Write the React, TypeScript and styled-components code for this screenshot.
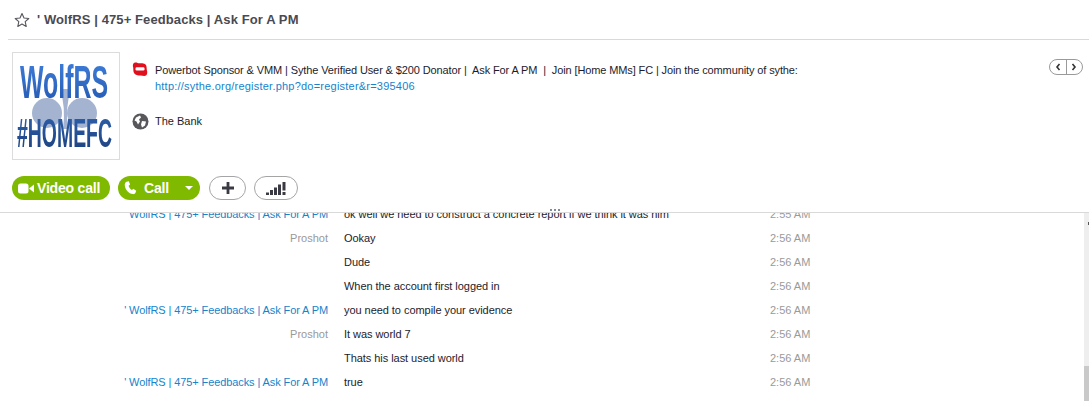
import React from 'react'
import styled, { createGlobalStyle } from 'styled-components'

const GlobalStyle = createGlobalStyle`
  html, body {
    margin: 0;
    padding: 0;
    background: #fff;
    overflow: hidden;
  }
  body {
    font-family: "Liberation Sans", sans-serif;
    font-size: 11px;
    color: #1c1c2c;
  }
`

const Page = styled.div`
  width: 1089px;
  height: 401px;
  display: flex;
  flex-direction: column;
  overflow: hidden;
`

const Header = styled.div`
  height: 40px;
  box-sizing: border-box;
  margin-left: 8px;
  border-bottom: 1px solid #d9d9d9;
  display: flex;
  align-items: center;
  gap: 7px;
  padding-left: 6px;
  flex-shrink: 0;
`

const Title = styled.div`
  font-size: 13px;
  font-weight: bold;
  color: #4a4a52;
  letter-spacing: 0.1px;
  white-space: pre;
`

const Profile = styled.div`
  height: 120px;
  box-sizing: border-box;
  padding: 12px 6px 0 12px;
  display: flex;
  flex-shrink: 0;
`

const Avatar = styled.div`
  width: 108px;
  height: 108px;
  box-sizing: border-box;
  border: 1px solid #dcdcdc;
  flex-shrink: 0;
`

const Details = styled.div`
  flex: 1;
  display: flex;
  flex-direction: column;
  gap: 19px;
  padding: 10px 0 0 12px;
`

const DetailRow = styled.div`
  display: flex;
  gap: 6px;
  line-height: 16px;
  white-space: pre;
`

const IconSlot = styled.div`
  width: 17px;
  height: 17px;
  flex-shrink: 0;
`

const Mood = styled.div`
  letter-spacing: -0.115px;
`

const Link = styled.div`
  color: #1683cc;
  letter-spacing: 0.22px;
`

const Pager = styled.div`
  width: 34px;
  height: 16px;
  box-sizing: border-box;
  border: 1px solid #9a9a9a;
  border-radius: 8px;
  margin-top: 7px;
  display: flex;
  flex-shrink: 0;
`

const PagerSide = styled.div<{ $divided?: boolean }>`
  flex: 1;
  display: flex;
  align-items: center;
  justify-content: center;
  border-right: ${p => (p.$divided ? '1px solid #9a9a9a' : 'none')};
`

const Toolbar = styled.div`
  height: 53px;
  box-sizing: border-box;
  border-bottom: 1px solid #d9d9d9;
  padding: 16px 0 0 12px;
  display: flex;
  align-items: flex-start;
  flex-shrink: 0;
  position: relative;
`

const Grip = styled.div`
  position: absolute;
  left: 550px;
  top: 49px;
  display: flex;
  gap: 2px;
`

const GripDot = styled.div`
  width: 2px;
  height: 2px;
  background: #7f8a9c;
`

const GreenButton = styled.div<{ $width: number; $gap: number; $after: number }>`
  width: ${p => p.$width}px;
  height: 24px;
  box-sizing: border-box;
  margin-right: ${p => p.$after}px;
  padding-left: 6px;
  border-radius: 12px;
  background: #7fba00;
  color: #fff;
  font-size: 14px;
  font-weight: bold;
  letter-spacing: -0.2px;
  display: flex;
  align-items: center;
  gap: ${p => p.$gap}px;
`

const Caret = styled.div`
  width: 0;
  height: 0;
  margin-left: 9px;
  border-left: 4px solid transparent;
  border-right: 4px solid transparent;
  border-top: 4px solid #fff;
`

const OutlineButton = styled.div<{ $width: number }>`
  width: ${p => p.$width}px;
  height: 24px;
  box-sizing: border-box;
  margin-right: 8px;
  border: 1px solid #a5a5a5;
  border-radius: 12px;
  display: flex;
  align-items: center;
  justify-content: center;
`

const Transcript = styled.div`
  flex: 1;
  min-height: 0;
  display: flex;
  overflow: hidden;
`

const MessageList = styled.div`
  flex: 1;
  margin-top: -11px;
`

const Message = styled.div`
  height: 24px;
  display: grid;
  grid-template-columns: 328px 410px 40px;
  column-gap: 16px;
  align-items: center;
  line-height: 24px;
  white-space: pre;
`

const Sender = styled.div<{ $self?: boolean }>`
  text-align: right;
  color: ${p => (p.$self ? '#999' : '#1683cc')};
  letter-spacing: ${p => (p.$self ? '0' : '-0.1px')};
`

const Body = styled.div`
  letter-spacing: -0.05px;
`

const Time = styled.div`
  color: #9a9a9a;
`

const ScrollTrack = styled.div`
  width: 5px;
  background: #eeeeee;
  display: flex;
  flex-direction: column;
  justify-content: flex-end;
  flex-shrink: 0;
  position: relative;
`

const ScrollMark = styled.div`
  position: absolute;
  right: 0;
  top: 9px;
  width: 1px;
  height: 3px;
  background: #555;
`

const ScrollThumb = styled.div`
  height: 35px;
  background: #c9c9c9;
`

const WOLF = "' WolfRS | 475+ Feedbacks | Ask For A PM"

const messages = [
  { from: WOLF, text: 'ok well we need to construct a concrete report if we think it was him', time: '2:55 AM' },
  { from: 'Proshot', self: true, text: 'Ookay', time: '2:56 AM' },
  { from: '', text: 'Dude', time: '2:56 AM' },
  { from: '', text: 'When the account first logged in', time: '2:56 AM' },
  { from: WOLF, text: 'you need to compile your evidence', time: '2:56 AM' },
  { from: 'Proshot', self: true, text: 'It was world 7', time: '2:56 AM' },
  { from: '', text: 'Thats his last used world', time: '2:56 AM' },
  { from: WOLF, text: 'true', time: '2:56 AM' },
]

const AvatarArt = () => (
  <svg width="106" height="106" viewBox="0 0 106 106">
    <defs>
      <linearGradient id="top" x1="0" y1="0" x2="0" y2="1">
        <stop offset="0" stopColor="#3f80dc" />
        <stop offset="1" stopColor="#2458b0" />
      </linearGradient>
      <linearGradient id="bottom" x1="0" y1="0" x2="0" y2="1">
        <stop offset="0" stopColor="#2f62ae" />
        <stop offset="1" stopColor="#1b3f7c" />
      </linearGradient>
      <filter id="soft"><feGaussianBlur stdDeviation="0.6" /></filter>
    </defs>
    <g filter="url(#soft)">
      <circle cx="34" cy="60" r="15" fill="#a3b3d0" />
      <circle cx="69" cy="60" r="15" fill="#a3b3d0" />
      <path d="M47 36 Q53 54 50 76 L55 76 Q52 54 58 36 Z" fill="#a3b3d0" />
      <text x="7" y="45" fontFamily="Liberation Sans" fontWeight="bold" fontSize="46" fill="url(#top)" textLength="88" lengthAdjust="spacingAndGlyphs">WolfRS</text>
      <text x="4" y="94" fontFamily="Liberation Sans" fontWeight="bold" fontSize="40" fill="url(#bottom)" textLength="95" lengthAdjust="spacingAndGlyphs">#HOMEFC</text>
    </g>
  </svg>
)

const App: React.FC = () => (
  <Page>
    <GlobalStyle />
    <Header>
      <svg width="16" height="16" viewBox="0 0 16 16">
        <path d="M8 1.500l2 4.500 4.800.5-3.600 3.200 1 4.800L8 12.100l-4.200 2.400 1-4.800L1.200 6.500 6 6z" fill="none" stroke="#55555c" strokeWidth="1.100" strokeLinejoin="round" />
      </svg>
      <Title>{WOLF}</Title>
    </Header>
    <Profile>
      <Avatar><AvatarArt /></Avatar>
      <Details>
        <DetailRow>
          <IconSlot>
            <svg width="17" height="17" viewBox="0 0 17 17">
              <path d="M1 2.500C1.500.5 4 0 5.500 1 8 1.500 11 .5 13 2c2 1.500 1.500 4 1.800 6 .7 2 .7 4.500-.8 5.500-1.500 1-3.500 0-5.500 0-2.500 0-5.500-.5-6.500-2.500-1-2-.5-4-.8-5.500C.8 4.500.7 3.500 1 2.500z" fill="#e0101e" />
              <rect x="3.500" y="5.300" width="9" height="3.200" rx="1.200" fill="#fff" />
            </svg>
          </IconSlot>
          <div>
            <Mood>{'Powerbot Sponsor & VMM | Sythe Verified User & $200 Donator |  Ask For A PM  |  Join [Home MMs] FC | Join the community of sythe:'}</Mood>
            <Link>http://sythe.org/register.php?do=register&r=395406</Link>
          </div>
        </DetailRow>
        <DetailRow>
          <IconSlot>
            <svg width="17" height="17" viewBox="0 0 17 17">
              <circle cx="8.500" cy="8.500" r="8" fill="#58585c" />
              <path d="M4 4.500l4-2 1 2-2 2 1 2-2 3-1.500-3-2-1zM10 8l4 .5-1 4-3 2-1-3z" fill="#fff" />
            </svg>
          </IconSlot>
          <div>The Bank</div>
        </DetailRow>
      </Details>
      <Pager>
        <PagerSide $divided>
          <svg width="6" height="8" viewBox="0 0 6 8"><path d="M4.500 1L2 4l2.500 3" fill="none" stroke="#333" strokeWidth="1.600" /></svg>
        </PagerSide>
        <PagerSide>
          <svg width="6" height="8" viewBox="0 0 6 8"><path d="M1.500 1L4 4 1.500 7" fill="none" stroke="#333" strokeWidth="1.600" /></svg>
        </PagerSide>
      </Pager>
    </Profile>
    <Toolbar>
      <GreenButton $width={98} $gap={3} $after={8}>
        <svg width="16" height="11" viewBox="0 0 16 11">
          <rect x="0" y="0.500" width="10.500" height="10" rx="2.500" fill="#fff" />
          <path d="M11 5.500L16 1.500v8z" fill="#fff" />
        </svg>
        Video call
      </GreenButton>
      <GreenButton $width={82} $gap={7} $after={9}>
        <svg width="13" height="14" viewBox="0 0 13 14">
          <path d="M2.500 .8L4.800 .3l1.300 3.200-1.500 1.300c.5 1.800 1.700 3.300 3.300 4.200l1.500-1.200 2.800 2-.8 2.300c-.5.900-1.500 1.300-2.500 1C4.500 12.600 1.500 9 .8 4.500.6 3 1.300 1.300 2.500.8z" fill="#fff" />
        </svg>
        Call
        <Caret />
      </GreenButton>
      <OutlineButton $width={37}>
        <svg width="14" height="14" viewBox="0 0 14 14"><path d="M7 1v12M1 7h12" stroke="#3a3a44" strokeWidth="2.800" /></svg>
      </OutlineButton>
      <OutlineButton $width={44}>
        <svg width="20" height="14" viewBox="0 0 20 14">
          <path d="M0 11.500h3V14H0zM4 9h3v5H4zM8 6.500h3V14H8zM12 3.500h3V14h-3zM16.500 1h3v8.500h-3zM16.500 11h3v3h-3z" fill="#3a3a44" />
        </svg>
      </OutlineButton>
      <Grip><GripDot /><GripDot /><GripDot /></Grip>
    </Toolbar>
    <Transcript>
      <MessageList>
        {messages.map((m, i) => (
          <Message key={i}>
            <Sender $self={m.self}>{m.from}</Sender>
            <Body>{m.text}</Body>
            <Time>{m.time}</Time>
          </Message>
        ))}
      </MessageList>
      <ScrollTrack>
        <ScrollMark />
        <ScrollThumb />
      </ScrollTrack>
    </Transcript>
  </Page>
)

export default App
